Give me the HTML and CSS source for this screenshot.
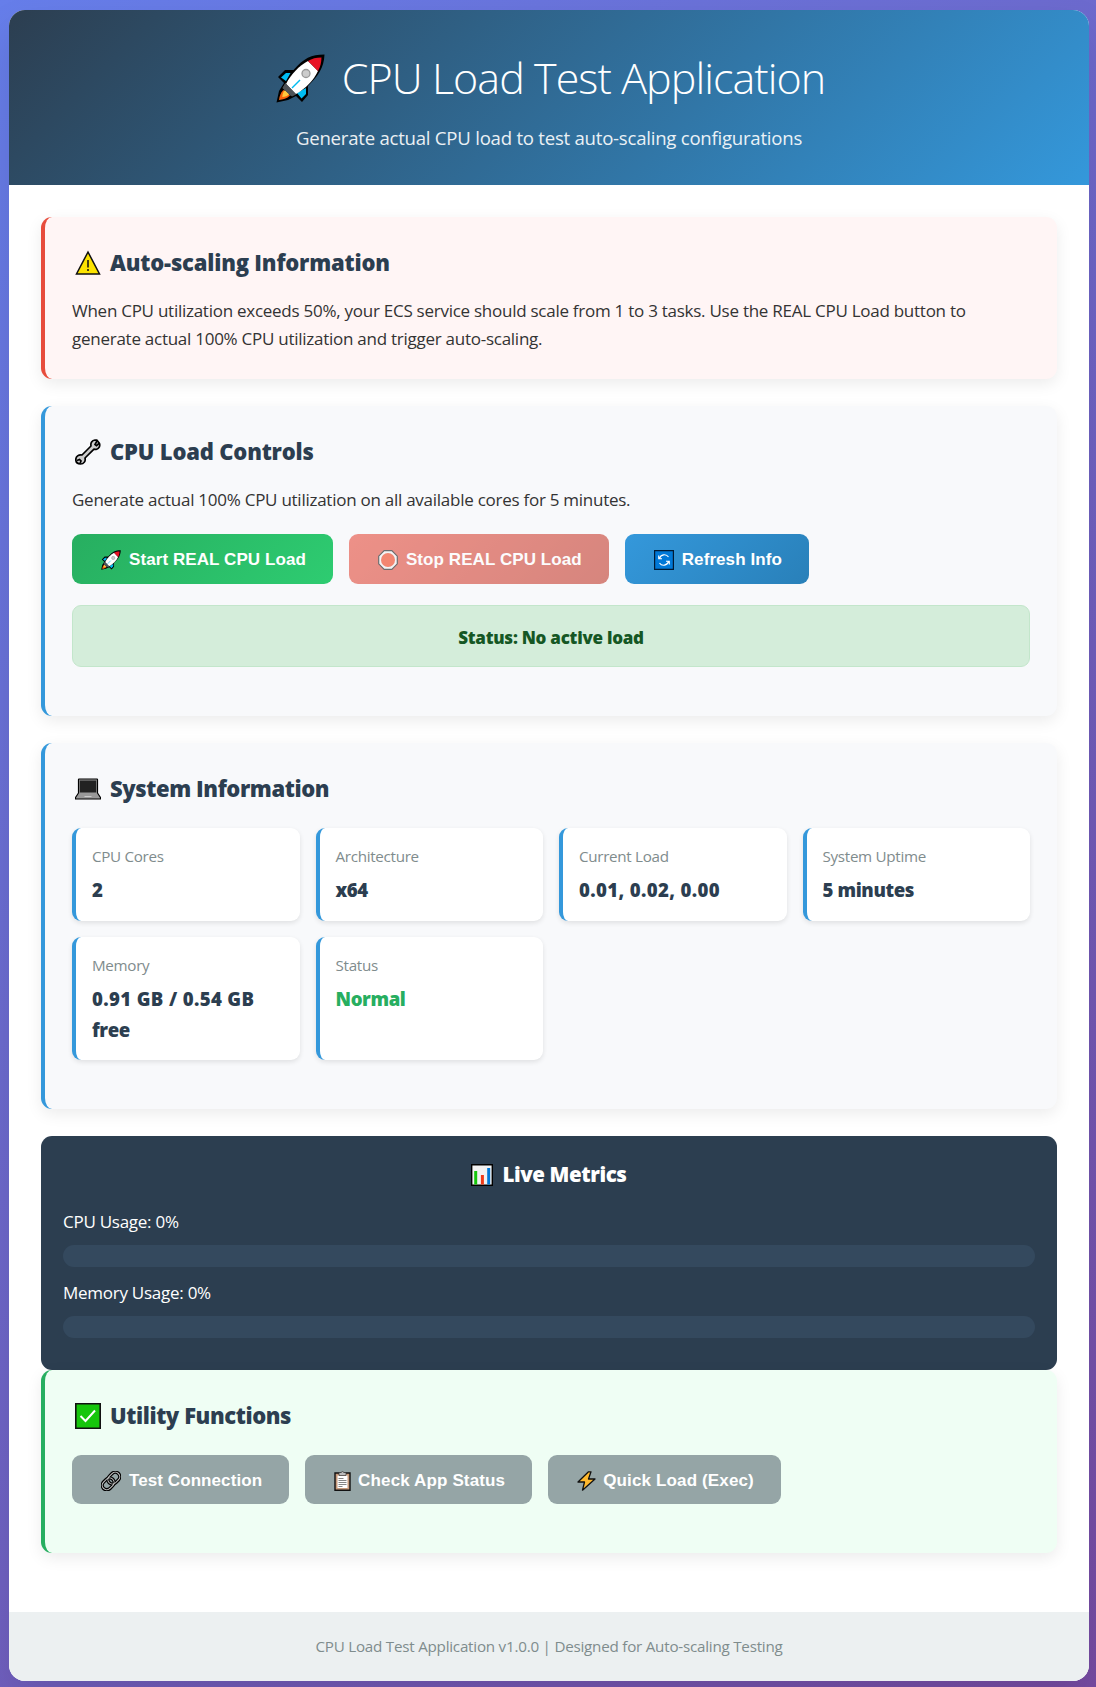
FILE: index.html
```html
<!DOCTYPE html>
<html lang="en">
<head>
<meta charset="utf-8">
<title>CPU Load Test Application</title>
<link rel="stylesheet" href="styles.css">
</head>
<body>
<svg class="defs" width="0" height="0" aria-hidden="true">
  <symbol id="rocket" viewBox="0 0 49 49">
    <path d="M48.5.5C35 .8 28 4 17.500 16H9L2 23l6 6L3 37 .5 48.500 12 46l8-4 6 6 6-7V32C42 22 48 14 48.500.500Z" fill="#000"/>
    <path d="M14.500 19H10l-5 4.500 5 3.500ZM30 34v6l-4.500 4.500L21 39Z" fill="#00bcf2"/>
    <path d="M7.500 36c-3 3-4 6-4.500 10 4-.5 8-1.500 11-4.500Z" fill="#f7630c"/>
    <path d="M9 36c-2 2-2.500 4-2.700 7 3-.3 5.500-1 7-3Z" fill="#ffc83d"/>
    <path d="M9 30l11 10-5 2-8.500-8Z" fill="#4e5358"/>
    <path d="M32 7C23 12 15 20 10 30l10 10c9-5 18-14 22-23Z" fill="#fff"/>
    <path d="M32 7c4-2.500 8-3.500 13.500-3.500C45.300 8 44.500 13 42 17Z" fill="#e81224"/>
    <path d="M9.500 29 20 40.500l-4 2L6.500 34Z" fill="#4e5358"/>
    <circle cx="30" cy="19.500" r="4" fill="#ccc" stroke="#999" stroke-width="1.300"/>
    <path d="m16 34 8-8" stroke="#00bcf2" stroke-width="1.500"/>
  </symbol>
</svg>
<div class="container">
  <header class="header">
    <h1><svg class="icon-hero"><use href="#rocket"/></svg><span>CPU Load Test Application</span></h1>
    <p>Generate actual CPU load to test auto-scaling configurations</p>
  </header>
  <main class="content">
    <section class="card card-alert">
      <h2><svg class="icon" viewBox="0 0 26 26"><path d="M13 2 24.500 24h-23Z" fill="#fde300" stroke="#111" stroke-width="1.500"/><path d="M13 10v7.500m0 1.500v2" stroke="#111" stroke-width="1.500"/></svg><span class="loose">Auto-scaling Information</span></h2>
      <p>When CPU utilization exceeds 50%, your ECS service should scale from 1 to 3 tasks. Use the REAL CPU Load button to generate actual 100% CPU utilization and trigger auto-scaling.</p>
    </section>
    <section class="card">
      <h2><svg class="icon" viewBox="0 0 26 26"><path d="M24.500 4.500c.8 2.600-.5 5-2.800 5.700-1 .3-1.900.2-2.700-.1L10 19c.8 3-1 6-4.500 6-3 0-4.700-2-4.700-4.500C.8 17.500 3.500 15.500 7 16L16 7c-.7-3 1-5.500 4-6l2 .2Z" fill="#ccc" stroke="#000" stroke-width="1.700" stroke-linejoin="round"/><path d="m22 2-2 3.500 1.500 1.200L24.500 4M2 21.500l2.500-1 1.500 1.500-1 2.500" fill="none" stroke="#000" stroke-width="1.700"/></svg><span class="loose">CPU Load Controls</span></h2>
      <p>Generate actual 100% CPU utilization on all available cores for 5 minutes.</p>
      <div class="button-row">
        <button class="btn btn-start"><svg class="icon-btn"><use href="#rocket"/></svg><span>Start REAL CPU Load</span></button>
        <button class="btn btn-stop" disabled><svg class="icon-btn" viewBox="0 0 20 20"><path d="M6.200.7h7.600l5.500 5.500v7.600l-5.500 5.500H6.200L.7 13.800V6.200Z" fill="#f2f2f2" stroke="#111" stroke-width="1.200"/><circle cx="10" cy="10" r="7" fill="#f03a17"/></svg><span>Stop REAL CPU Load</span></button>
        <button class="btn btn-refresh"><svg class="icon-btn" viewBox="0 0 20 20"><path d="M.6.600h18.800v18.800H.600Z" fill="#0078d7" stroke="#001a33" stroke-width="1.200"/><path d="M5.500 8.500a5 5 0 0 1 9-1.500M14.500 11.500a5 5 0 0 1-9 1.500M4.700 5.500v3.300H8M15.300 14.500v-3.300H12" fill="none" stroke="#fff" stroke-width="1.100"/></svg><span>Refresh Info</span></button>
      </div>
      <div class="status">Status: No active load</div>
    </section>
    <section class="card">
      <h2><svg class="icon" viewBox="0 0 26 26"><path d="M3.500 3.500Q3.500 3 4 3h18q.5 0 .5.500V17l3 4.500V23H.500v-1.500L3.500 17Z" fill="#999" stroke="#000" stroke-width="1.200" stroke-linejoin="round"/><path d="M4.800 4.500h16.400v12H4.800Z" fill="#222"/><path d="M9.500 20.500h7" stroke="#ccc"/></svg><span>System Information</span></h2>
      <div class="tiles">
        <div class="tile"><div class="tile-label">CPU Cores</div><div class="tile-value">2</div></div>
        <div class="tile"><div class="tile-label">Architecture</div><div class="tile-value">x64</div></div>
        <div class="tile"><div class="tile-label">Current Load</div><div class="tile-value tile-numeric">0.01, 0.02, 0.00</div></div>
        <div class="tile"><div class="tile-label">System Uptime</div><div class="tile-value">5 minutes</div></div>
        <div class="tile"><div class="tile-label">Memory</div><div class="tile-value"><span class="tile-numeric">0.91 GB / 0.54 GB</span> free</div></div>
        <div class="tile"><div class="tile-label">Status</div><div class="tile-value tile-ok">Normal</div></div>
      </div>
    </section>
    <section class="metrics">
      <h3><svg class="icon-chart" viewBox="0 0 22 22"><path d="M.7.700h20.600v20.600H.700Z" fill="#f2f2f2" stroke="#000" stroke-width="1.400"/><path d="M4.700 7v13.500" stroke="#16c60c" stroke-width="3"/><path d="M11.400 11v9.500" stroke="#f03a17" stroke-width="3"/><path d="M17.700 4v16.500" stroke="#0078d7" stroke-width="3"/></svg><span>Live Metrics</span></h3>
      <div class="metric-label">CPU Usage: 0%</div>
      <div class="bar"><div class="bar-fill" style="width:0%"></div></div>
      <div class="metric-label">Memory Usage: 0%</div>
      <div class="bar"><div class="bar-fill" style="width:0%"></div></div>
    </section>
    <section class="card card-ok">
      <h2><svg class="icon" viewBox="0 0 26 26"><path d="M.8.800h24.400v24.400H.800Z" fill="#16c60c" stroke="#111" stroke-width="1.600"/><path d="m5.500 13 5 5L20 7.500" fill="none" stroke="#fff" stroke-width="2"/></svg><span>Utility Functions</span></h2>
      <div class="button-row">
        <button class="btn btn-util"><svg class="icon-btn" viewBox="0 0 20 20"><g transform="rotate(-45 10 10)" fill="none"><rect x="-.5" y="5.500" width="13" height="9" rx="4.500" stroke="#000" stroke-width="3.400"/><rect x="7.500" y="5.500" width="13" height="9" rx="4.500" stroke="#000" stroke-width="3.400"/><rect x="-.5" y="5.500" width="13" height="9" rx="4.500" stroke="#ccc"/><rect x="7.500" y="5.500" width="13" height="9" rx="4.500" stroke="#ccc"/></g></svg><span>Test Connection</span></button>
        <button class="btn btn-util btn-check"><svg class="icon-clip" viewBox="0 0 17 20"><path d="M1 2h15v17.300H1Z" fill="#c69a7c" stroke="#111" stroke-width="1.400"/><path d="M3.500 4.500h10V17h-10Z" fill="#fff"/><path d="M5 1.500h2L8.500.500 10 1.500h2v3H5Z" fill="#bbb" stroke="#333" stroke-width=".7"/><path d="M4.500 7.500h5m-5 2h8m-8 2h8m-8 2h8m-8 2h4" stroke="#777" stroke-width=".9"/></svg><span>Check App Status</span></button>
        <button class="btn btn-util btn-check"><svg class="icon-bolt" viewBox="0 0 19 20"><path d="M11.500.800 1 11h6.500L5.500 19.200 18 8h-6.500L14 .800Z" fill="#ffb92e" stroke="#111" stroke-width="1.300" stroke-linejoin="round"/></svg><span>Quick Load (Exec)</span></button>
      </div>
    </section>
  </main>
  <footer class="footer">CPU Load Test Application v1.0.0 | Designed for Auto-scaling Testing</footer>
</div>
</body>
</html>
```
FILE: styles.css
```css
* { box-sizing: border-box; margin: 0; padding: 0; }

body {
  min-height: 1687px;
  padding: 10px 7px 6px 9px;
  background: linear-gradient(135deg, #667eea 0%, #764ba2 100%);
  font-family: "Open Sans", "Noto Sans", sans-serif;
  font-size: 17px;
  letter-spacing: -.26px;
  line-height: 28px;
  color: #333;
}

.defs { position: absolute; }
svg { display: block; flex: none; }

.container {
  overflow: hidden;
  border-radius: 16px;
  background: #fff;
  box-shadow: 0 20px 40px rgba(0, 0, 0, .1);
}

.header {
  padding: 33px 32px 32px;
  background: linear-gradient(135deg, #2c3e50 0%, #3498db 100%);
  color: #fff;
  text-align: center;
}

.header h1 {
  display: flex;
  align-items: center;
  justify-content: center;
  margin-bottom: 9px;
  font-size: 43px;
  font-weight: 300;
  letter-spacing: -.93px;
  line-height: 70px;
}

.header p { font-size: 18.6px; letter-spacing: -.24px; line-height: 31px; opacity: .9; }

.icon-hero { width: 49px; height: 49px; margin: 1px 17px 0 3px; }

.content { padding: 32px 32px 59px; }

.card {
  margin-bottom: 27px;
  padding: 28px 27px 49px;
  border-left: 4px solid #3498db;
  border-radius: 11px;
  background: #f8f9fb;
  box-shadow: 0 5px 16px rgba(0, 0, 0, .08);
}
.card:last-child { margin-bottom: 0; }
.card-alert { padding-bottom: 26px; border-left-color: #e74c3c; background: #fff5f5; }
.card-ok { border-left-color: #27ae60; background: #effef4; }

.card h2 {
  display: flex;
  align-items: center;
  gap: 9px;
  margin-bottom: 17px;
  padding-left: 3px;
  color: #2c3e50;
  font-size: 22px;
  font-weight: 800;
  letter-spacing: -.41px;
  line-height: 35px;
}
.card h2 .loose { letter-spacing: -.19px; }

.icon { width: 26px; height: 26px; }

.button-row { display: flex; gap: 16px; margin-top: 22px; }
.card p + .button-row { margin-top: 20px; }

.btn {
  display: flex;
  align-items: center;
  gap: 8px;
  height: 50px;
  padding: 2px 27px 0 29px;
  border: 0;
  border-radius: 9px;
  color: #fff;
  font: bold 17px "Liberation Sans", Arial, sans-serif;
  letter-spacing: .08px;
}
.icon-btn { width: 20px; height: 20px; }
.icon-clip { width: 17px; height: 20px; }
.icon-bolt { width: 19px; height: 20px; }

.btn-start { background: linear-gradient(135deg, #27ae60, #2ecc71); }
.btn-stop { background: linear-gradient(135deg, #e74c3c, #c0392b); opacity: .6; }
.btn-refresh { background: linear-gradient(135deg, #3498db, #2980b9); }
.btn-util { height: 49px; background: #95a5a6; }
.btn-check { gap: 7px; letter-spacing: .14px; }

.status {
  height: 62px;
  margin-top: 21px;
  padding: 18px 16px 14px;
  border: 1px solid #c3e6cb;
  border-radius: 9px;
  background: #d4edda;
  color: #155724;
  font-size: 17px;
  font-weight: 800;
  text-align: center;
}

.tiles {
  display: grid;
  grid-template-columns: repeat(4, 1fr);
  grid-template-rows: 93px 123px;
  gap: 16px;
  margin-top: 22px;
}
.tile {
  padding: 16px 16px 14px;
  border-left: 4px solid #3498db;
  border-radius: 9px;
  background: #fff;
  box-shadow: 0 2px 5px rgba(0, 0, 0, .1);
}
.tile-label { margin-bottom: 6px; color: #7f8c8d; font-size: 15.2px; letter-spacing: -.3px; line-height: 25px; }
.tile-value { color: #2c3e50; font-size: 18.6px; font-weight: 800; letter-spacing: -.38px; line-height: 30.8px; }
.tile-numeric { letter-spacing: .36px; }
.tile-ok { color: #27ae60; }

.metrics {
  padding: 22px 22px 32px;
  border-radius: 11px;
  background: #2c3e50;
  color: #fff;
}
.metrics h3 {
  display: flex;
  align-items: center;
  justify-content: center;
  gap: 9px;
  margin-bottom: 17px;
  font-size: 20.5px;
  font-weight: 800;
  letter-spacing: -.41px;
  line-height: 33px;
}
.icon-chart { width: 22px; height: 22px; }
.metric-label { margin-bottom: 9px; }
.bar { height: 22px; margin-bottom: 12px; overflow: hidden; border-radius: 11px; background: #34495e; }
.bar:last-child { margin-bottom: 0; }
.bar-fill { height: 100%; background: #27ae60; }

.footer {
  height: 69px;
  padding: 22px;
  background: #ecf0f1;
  color: #7f8c8d;
  font-size: 15.2px;
  letter-spacing: -.23px;
  line-height: 25px;
  text-align: center;
}
```
